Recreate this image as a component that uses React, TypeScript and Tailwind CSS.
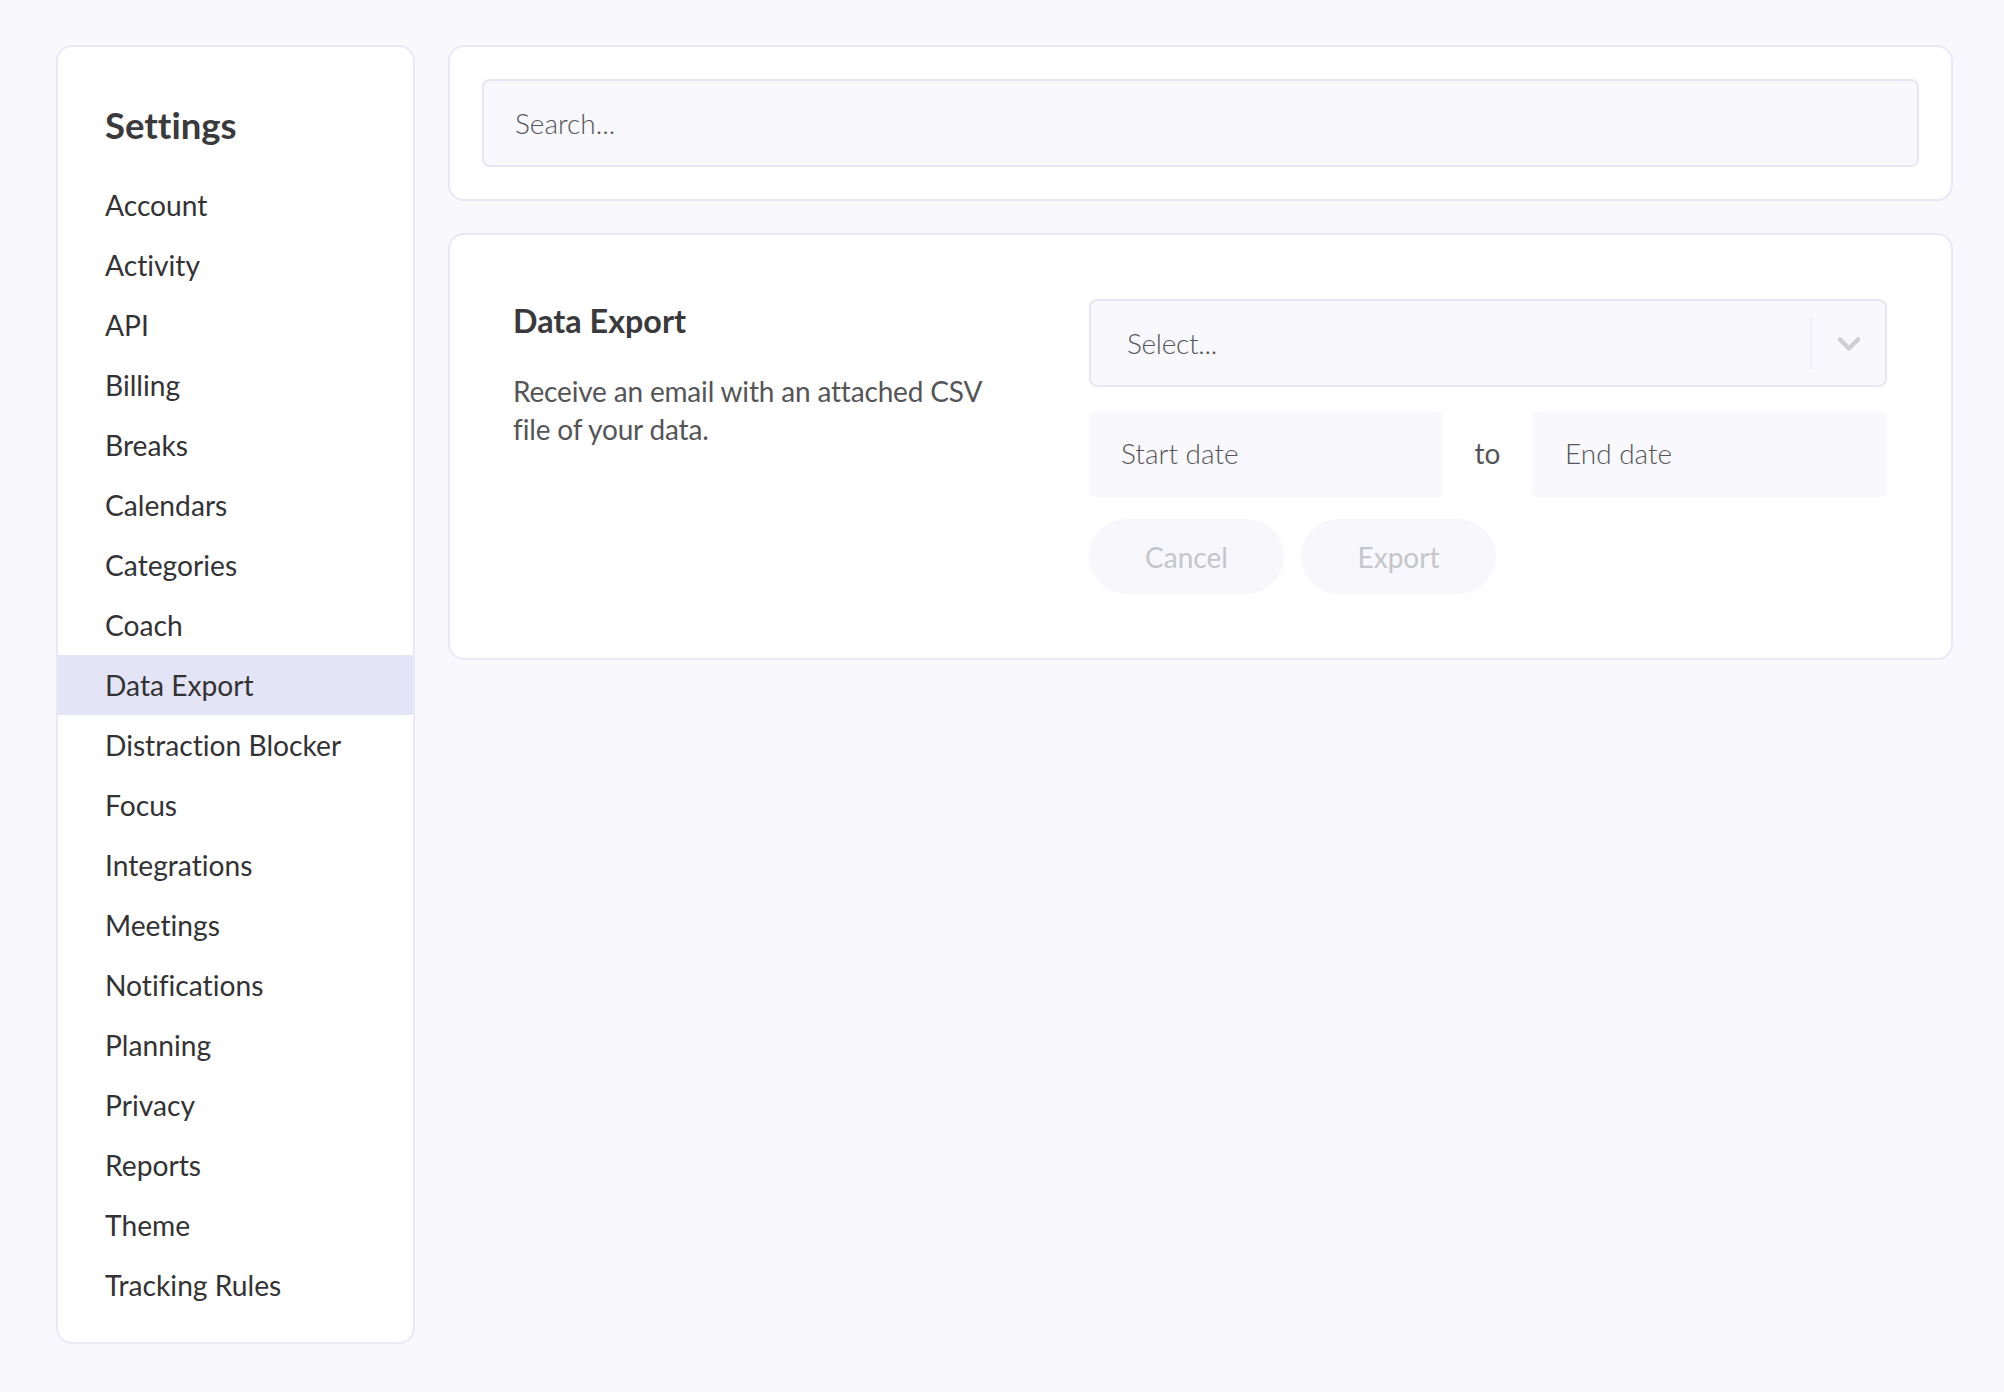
import { ChevronDown } from 'lucide-react'

const items = [
  'Account',
  'Activity',
  'API',
  'Billing',
  'Breaks',
  'Calendars',
  'Categories',
  'Coach',
  'Data Export',
  'Distraction Blocker',
  'Focus',
  'Integrations',
  'Meetings',
  'Notifications',
  'Planning',
  'Privacy',
  'Reports',
  'Theme',
  'Tracking Rules',
]

function Sidebar() {
  return (
    <aside className="w-[359px] shrink-0 self-start rounded-2xl border-2 border-[#e8e8f6] bg-white pb-[27px]">
      <h1 className="flex h-[128px] items-center pl-[47px] pt-[28px] text-[36.5px] font-bold text-[#3a3a3c]">Settings</h1>
      <nav className="flex flex-col">
        {items.map((item) => (
          <div
            key={item}
            className={
              item === 'Data Export'
                ? 'flex h-[60px] items-center bg-[#e4e4f7] pl-[47px] text-[28.2px] text-[#333336]'
                : 'flex h-[60px] items-center pl-[47px] text-[28.2px] text-[#333336]'
            }
          >
            {item}
          </div>
        ))}
      </nav>
    </aside>
  )
}

function DataExport() {
  return (
    <section className="flex h-[427px] rounded-2xl border-2 border-[#e8e8f6] bg-white pl-[63px] pr-[64px] pt-[64px]">
      <div className="w-[576px] shrink-0 pt-[2px]">
        <h2 className="text-[32.3px] leading-[40px] font-bold text-[#3a3a3c]">Data Export</h2>
        <p className="mt-[31px] w-[500px] text-[28px] leading-[38px] tracking-[-0.17px] text-[#555558]">
          Receive an email with an attached CSV file of your data.
        </p>
      </div>
      <div className="flex flex-1 flex-col">
        <div className="flex h-[88px] items-center rounded-lg border-2 border-[#e6e6f4] bg-[#f8f8fd] pl-[36px]">
          <span className="flex-1 text-[28px] font-light tracking-[-0.3px] text-[#555558]">Select...</span>
          <div className="h-[52px] w-[2px] bg-[#ecedf7]" />
          <div className="flex w-[73px] justify-center pt-[2px]">
            <ChevronDown size={36} strokeWidth={3} className="text-[#cfcfd3]" />
          </div>
        </div>
        <div className="mt-[24px] flex items-center">
          <input
            placeholder="Start date"
            className="h-[86px] w-[354px] rounded-md bg-[#f8f8fd] pb-[2px] pl-[32px] text-[28px] font-light outline-none placeholder:text-[#555558]"
          />
          <span className="flex-1 pb-[2px] text-center text-[28px] text-[#555558]">to</span>
          <input
            placeholder="End date"
            className="h-[86px] w-[355px] rounded-md bg-[#f8f8fd] pb-[2px] pl-[33px] text-[28px] font-light outline-none placeholder:text-[#555558]"
          />
        </div>
        <div className="mt-[22px] flex gap-[17px]">
          <button className="h-[75px] w-[195px] rounded-full bg-[#f8f8fc] text-[28px] text-[#c5c6ca]">Cancel</button>
          <button className="h-[75px] w-[195px] rounded-full bg-[#f8f8fc] text-[28px] text-[#c5c6ca]">Export</button>
        </div>
      </div>
    </section>
  )
}

export default function App() {
  return (
    <div className="flex min-h-[1392px] gap-[33px] bg-[#f8f8fd] pb-[48px] pl-[56px] pr-[51px] pt-[45px] font-['Lato','Liberation_Sans',sans-serif] [font-variant-ligatures:none]">
      <Sidebar />
      <main className="flex flex-1 flex-col gap-[32px]">
        <div className="rounded-2xl border-2 border-[#e8e8f6] bg-white p-[32px]">
          <input
            placeholder="Search..."
            className="h-[88px] w-full rounded-lg border-2 border-[#e6e6f4] bg-[#f8f8fd] pl-[31px] text-[28px] font-light outline-none placeholder:text-[#555558]"
          />
        </div>
        <DataExport />
      </main>
    </div>
  )
}
